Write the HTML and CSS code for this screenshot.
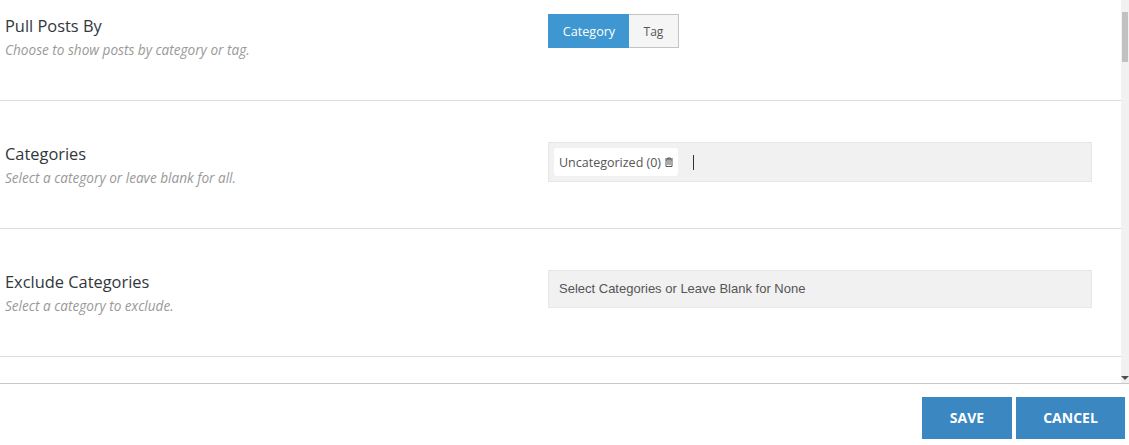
FILE: index.html
```html
<!DOCTYPE html>
<html lang="en">
<head>
    <meta charset="UTF-8">
    <meta name="viewport" content="width=device-width, initial-scale=1.0">
    <title>Post Settings</title>
    <link rel="stylesheet" href="styles.css">
</head>
<body>
    <div class="panel">
        <div class="settings">
            <div class="setting-row first">
                <div class="setting-info">
                    <h3>Pull Posts By</h3>
                    <p>Choose to show posts by category or tag.</p>
                </div>
                <div class="setting-control">
                    <div class="toggle">
                        <button class="toggle-btn active">Category</button>
                        <button class="toggle-btn">Tag</button>
                    </div>
                </div>
            </div>
            <div class="setting-row">
                <div class="setting-info">
                    <h3>Categories</h3>
                    <p>Select a category or leave blank for all.</p>
                </div>
                <div class="setting-control">
                    <div class="select-box">
                        <span class="chip">Uncategorized (0)
                            <svg class="trash" viewBox="0 0 10 10" width="10" height="10">
                                <path d="M1 2h8M3.5 2V1h3v1M2 3h6v6.5H2z" fill="none" stroke="#555" stroke-width="1"/>
                                <path d="M4 4v4M6 4v4" stroke="#555" stroke-width="1"/>
                            </svg>
                        </span>
                        <span class="caret"></span>
                    </div>
                </div>
            </div>
            <div class="setting-row">
                <div class="setting-info">
                    <h3>Exclude Categories</h3>
                    <p>Select a category to exclude.</p>
                </div>
                <div class="setting-control">
                    <div class="select-box placeholder">Select Categories or Leave Blank for None</div>
                </div>
            </div>
            <div class="setting-row last"></div>
        </div>
        <div class="scrollbar">
            <div class="scroll-thumb"></div>
            <div class="scroll-arrow"></div>
        </div>
    </div>
    <div class="footer">
        <button class="action-btn save">SAVE</button>
        <button class="action-btn cancel">CANCEL</button>
    </div>
</body>
</html>
```

FILE: styles.css
```css
* {
    box-sizing: border-box;
}
html, body {
    height: 100%;
}
body {
    margin: 0;
    font-family: "Open Sans", Arial, sans-serif;
    background-color: #fff;
    color: #32373c;
    overflow: hidden;
}
.panel {
    display: flex;
    height: 384px;
    border-bottom: 1px solid #c8c8c8;
}
.settings {
    flex: 1;
}
.setting-row {
    display: flex;
    height: 128px;
    padding: 41px 29px 0 5px;
    border-bottom: 1px solid #ddd;
}
.setting-row.first {
    height: 101px;
    padding-top: 14px;
}
.setting-row.last {
    height: 27px;
    padding: 0;
    border-bottom: none;
}
.setting-info {
    width: 543px;
}
.setting-info h3 {
    margin: 0;
    font-size: 16.4px;
    font-weight: 400;
    line-height: 24px;
    color: #32373c;
}
.setting-info p {
    margin: 0;
    font-size: 13.6px;
    font-style: italic;
    line-height: 24px;
    color: #999;
}
.setting-control {
    flex: 1;
}
.toggle {
    display: flex;
}
.toggle-btn {
    width: 50px;
    height: 34px;
    padding: 0;
    font-family: "Open Sans", Arial, sans-serif;
    font-size: 12px;
    color: #555;
    background-color: #f5f5f5;
    border: 1px solid #c4c4c4;
    border-left: none;
}
.toggle-btn.active {
    width: 81px;
    padding: 0 0 0 1px;
    font-size: 12.6px;
    color: #fff;
    background-color: #3e97d1;
    border: none;
}
.select-box {
    display: flex;
    align-items: center;
    height: 40px;
    padding: 0 5px;
    background-color: #f1f1f1;
    border: 1px solid #e6e6e6;
}
.chip {
    display: flex;
    align-items: center;
    gap: 3px;
    height: 28px;
    padding: 0 4px 0 5px;
    font-size: 12.5px;
    color: #555;
    background-color: #fff;
    border-radius: 3px;
}
.caret {
    width: 1px;
    height: 15px;
    margin-left: 15px;
    background-color: #333;
}
.placeholder {
    height: 38px;
    padding: 0 10px 2px;
    font-family: "Liberation Sans", Arial, sans-serif;
    font-size: 13px;
    color: #555;
}
.scrollbar {
    position: relative;
    width: 8px;
    background-color: #f1f1f1;
}
.scroll-thumb {
    height: 50px;
    margin: 12px 1px 0;
    background-color: #c1c1c1;
}
.scroll-arrow {
    position: absolute;
    right: 0;
    bottom: 3px;
    border-top: 4px solid #505050;
    border-left: 4px solid transparent;
    border-right: 4px solid transparent;
}
.footer {
    display: flex;
    justify-content: flex-end;
    gap: 4px;
    padding: 13px 4px 0 0;
}
.action-btn {
    height: 42px;
    padding: 0 0 2px;
    font-family: "Open Sans", Arial, sans-serif;
    font-size: 14px;
    font-weight: 700;
    color: #fff;
    background-color: #3a87c2;
    border: none;
}
.save {
    width: 90px;
}
.cancel {
    width: 109px;
}
```
